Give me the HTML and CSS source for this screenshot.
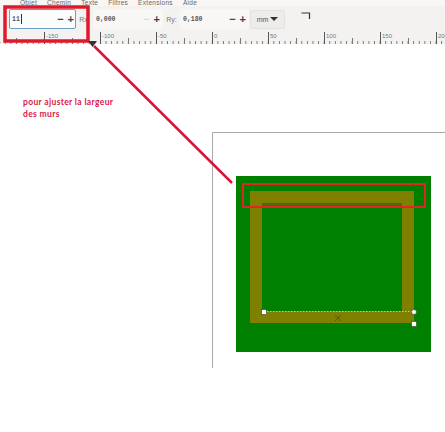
FILE: index.html
```html
<!DOCTYPE html>
<html lang="fr">
<head>
  <meta charset="UTF-8">
  <meta name="viewport" content="width=device-width, initial-scale=1.0">
  <title>Largeur des murs</title>
  <link rel="stylesheet" href="styles.css">
</head>
<body>
  <div class="menu">
    <span>Objet</span>
    <span>Chemin</span>
    <span>Texte</span>
    <span>Filtres</span>
    <span>Extensions</span>
    <span>Aide</span>
  </div>

  <div class="toolbar">
    <div class="field field-active">
      <span class="value">11</span><span class="caret"></span>
      <span class="steps"><b>−</b><b>+</b></span>
    </div>
    <label class="field-label">Rx:</label>
    <div class="field field-rx">
      <span class="value">0,000</span>
      <span class="steps"><b class="faint">−</b><b>+</b></span>
    </div>
    <label class="field-label">Ry:</label>
    <div class="field field-ry">
      <span class="value">0,180</span>
      <span class="steps"><b>−</b><b>+</b></span>
    </div>
    <div class="unit">mm<i class="arrow-down"></i></div>
    <svg class="corner-icon" width="10" height="7" viewBox="0 0 10 7">
      <path d="M0.500 1H8.500V7" fill="none" stroke="#333" stroke-width="1.200"/>
    </svg>
  </div>

  <div class="ruler">
    <span>-150</span>
    <span>-100</span>
    <span>-50</span>
    <span>0</span>
    <span>50</span>
    <span>100</span>
    <span>150</span>
    <span>200</span>
  </div>

  <div class="canvas">
    <p class="note">pour ajuster la largeur<br>des murs</p>
  </div>

  <!-- page, walls and red marks, drawn in page coordinates -->
  <svg class="drawing" width="445" height="432" viewBox="0 0 445 432">
    <path d="M212.500 368V132.500H445" fill="none" stroke="#aaa"/>

    <rect x="236" y="176" width="195" height="176" fill="#008000"/>

    <rect x="250" y="191" width="164" height="12" fill="#808000"/>
    <rect x="250" y="203" width="164" height="3" fill="#4f6a00"/>
    <rect x="250" y="203" width="12" height="120" fill="#808000"/>
    <rect x="402" y="203" width="12" height="120" fill="#808000"/>
    <rect x="250" y="311" width="164" height="12" fill="#808000"/>

    <!-- selection on the bottom wall -->
    <path d="M264 311.500H414" fill="none" stroke="#c4c88a" stroke-dasharray="1.500 1.500"/>
    <path d="M264 323.500H414" fill="none" stroke="#2f6a00" stroke-dasharray="1.500 1.500"/>
    <path d="M335 315l6 6M341 315l-6 6" stroke="#4a6000" stroke-width="1"/>
    <rect x="261.500" y="309.500" width="5" height="5" fill="#fff" stroke="#222" stroke-width="0.500"/>
    <rect x="411.500" y="321.500" width="5" height="5" fill="#fff" stroke="#222" stroke-width="0.500"/>
    <circle cx="414" cy="312" r="2.500" fill="#fff" stroke="#222" stroke-width="0.500"/>

    <rect x="243" y="184" width="182" height="23" fill="none" stroke="#e0242a" stroke-width="2"/>

    <rect x="5" y="7" width="83" height="34" fill="none" stroke="#e0182c" stroke-width="3.500"/>
    <path d="M94 46L232 183" fill="none" stroke="#d8143c" stroke-width="2.500"/>
    <path d="M88 41h9l-4.500 6z" fill="#333"/>
  </svg>
</body>
</html>
```

FILE: styles.css
```css
body {
  margin: 0;
  width: 445px;
  height: 432px;
  overflow: hidden;
  position: relative;
  background-color: #fff;
  font-family: 'Liberation Sans', Arial, sans-serif;
  color: #333;
}
.menu {
  height: 6px;
  display: flex;
  gap: 10px;
  padding-left: 20px;
  background-color: #f9f6f3;
  font-size: 6.500px;
  line-height: 6px;
  letter-spacing: 0.300px;
  color: #666;
}
.toolbar {
  height: 26px;
  box-sizing: border-box;
  display: flex;
  align-items: center;
  padding: 0 0 0 9px;
  background-color: #f4f2f0;
  font-size: 7px;
}
.field {
  height: 20px;
  box-sizing: border-box;
  display: flex;
  align-items: center;
  padding: 0 3px;
  border-radius: 2px;
  background-color: #f8f7f6;
}
.field-active {
  width: 67px;
  padding: 0 1px 0 2px;
  border: 1px solid #6c9fc4;
  background-color: #fbfcfd;
}
.field-rx {
  width: 70px;
}
.field-ry {
  width: 69px;
}
.value {
  font-family: 'Liberation Mono', monospace;
  font-weight: bold;
  font-size: 6.500px;
  color: #555;
}
.caret {
  width: 1px;
  height: 10px;
  margin-left: 1px;
  background-color: #333;
}
.steps {
  margin-left: auto;
  display: flex;
  gap: 4px;
  font-size: 11px;
  line-height: 11px;
  color: #444;
}
.faint {
  color: #ddd;
}
.field-label {
  width: 17px;
  text-align: center;
  color: #777;
}
.unit {
  width: 35px;
  height: 19px;
  box-sizing: border-box;
  margin-left: 1px;
  display: flex;
  align-items: center;
  justify-content: center;
  gap: 2px;
  border: 1px solid #e4e1de;
  border-radius: 2px;
  background-color: #eeecea;
  font-size: 7px;
  color: #555;
}
.arrow-down {
  border-top: 4px solid #333;
  border-left: 4px solid transparent;
  border-right: 4px solid transparent;
}
.corner-icon {
  margin: -7px 0 0 16px;
}
.ruler {
  height: 12px;
  box-sizing: border-box;
  display: flex;
  overflow: hidden;
  padding-left: 44px;
  background-color: #f4f2f0;
  background-image:
    linear-gradient(90deg, #555 1px, transparent 1px),
    linear-gradient(90deg, #777 1px, transparent 1px),
    linear-gradient(90deg, #777 1px, transparent 1px);
  background-size: 56px 12px, 28px 6px, 5.600px 3px;
  background-position: 44px 0, 44px 100%, 44px 100%;
  background-repeat: repeat-x;
  font-size: 6px;
  line-height: 8px;
  color: #777;
}
.ruler span {
  flex: 0 0 56px;
  box-sizing: border-box;
  padding-left: 2px;
}
.canvas {
  height: 388px;
  border-top: 1px solid #fff;
  box-sizing: border-box;
}
.note {
  margin: 0;
  padding: 52px 0 0 23px;
  font-family: Lato, sans-serif;
  font-weight: bold;
  font-size: 8.500px;
  line-height: 11.500px;
  letter-spacing: 0.350px;
  color: #d8204a;
}
.drawing {
  position: absolute;
  top: 0;
  left: 0;
}
```
